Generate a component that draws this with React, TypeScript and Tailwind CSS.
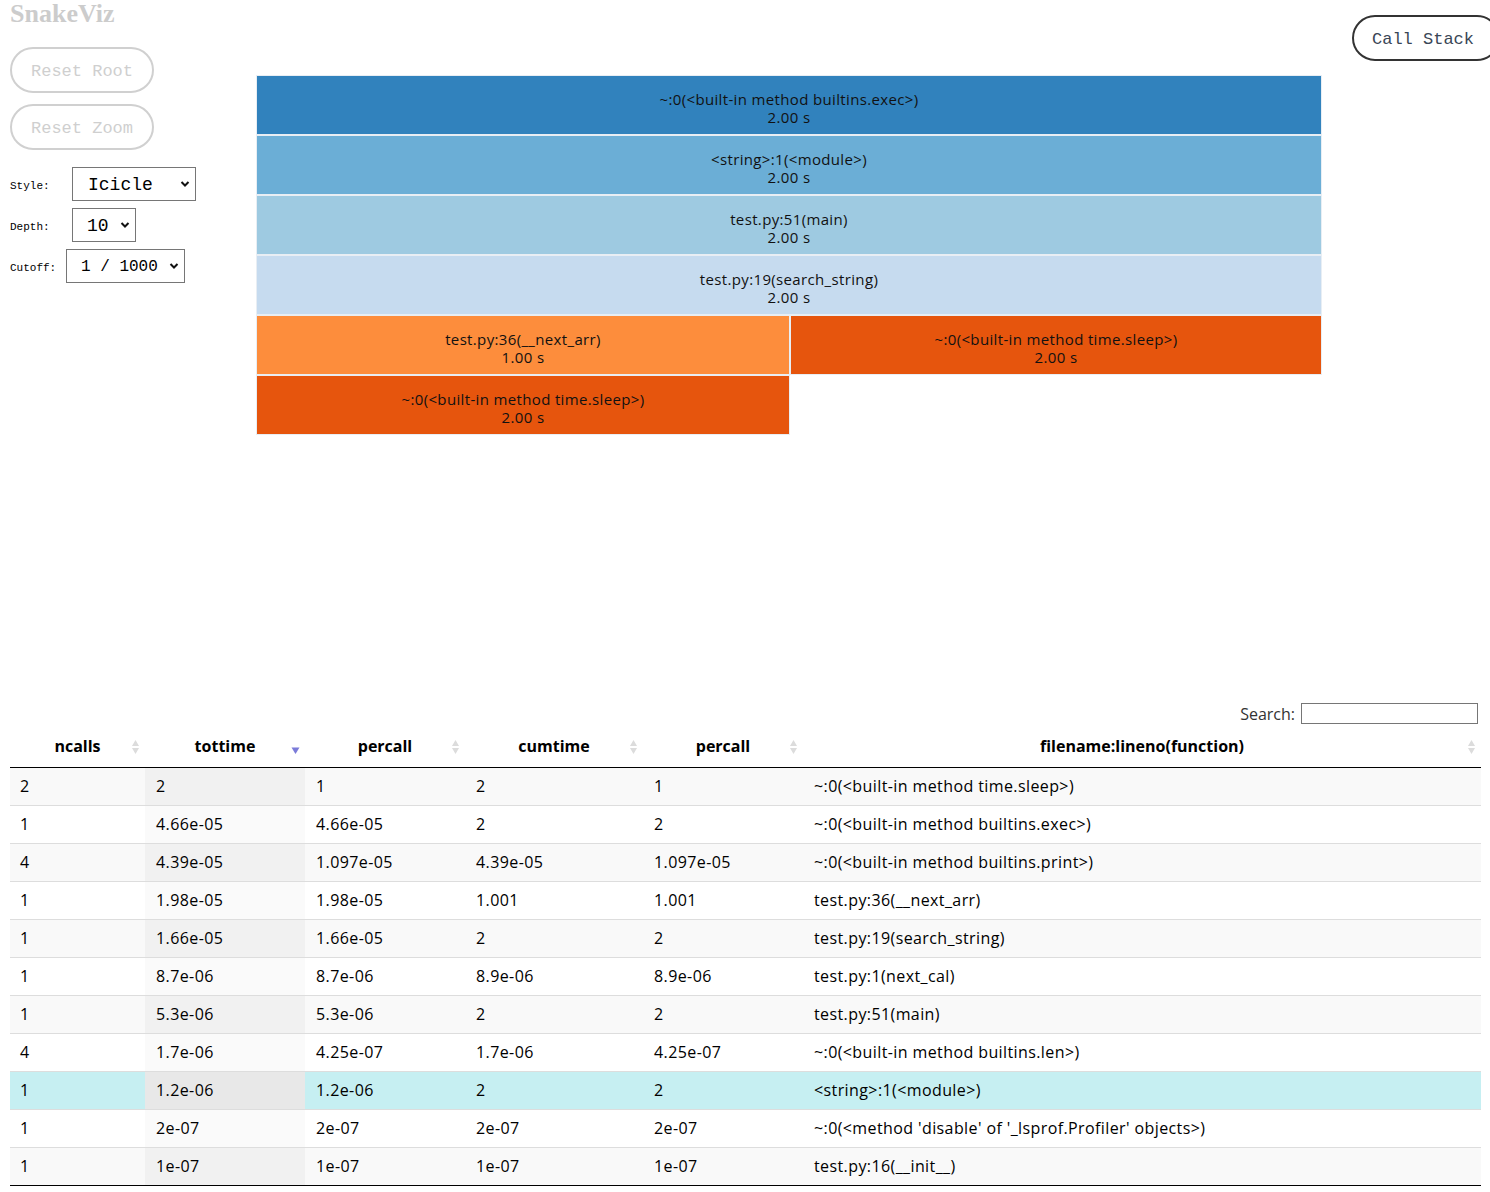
import React from "react";

type Row = {
  ncalls: string;
  tottime: string;
  percall: string;
  cumtime: string;
  percall2: string;
  fn: string;
  hi?: boolean;
};

const rows: Row[] = [
  { ncalls: "2", tottime: "2", percall: "1", cumtime: "2", percall2: "1", fn: "~:0(<built-in method time.sleep>)" },
  { ncalls: "1", tottime: "4.66e-05", percall: "4.66e-05", cumtime: "2", percall2: "2", fn: "~:0(<built-in method builtins.exec>)" },
  { ncalls: "4", tottime: "4.39e-05", percall: "1.097e-05", cumtime: "4.39e-05", percall2: "1.097e-05", fn: "~:0(<built-in method builtins.print>)" },
  { ncalls: "1", tottime: "1.98e-05", percall: "1.98e-05", cumtime: "1.001", percall2: "1.001", fn: "test.py:36(__next_arr)" },
  { ncalls: "1", tottime: "1.66e-05", percall: "1.66e-05", cumtime: "2", percall2: "2", fn: "test.py:19(search_string)" },
  { ncalls: "1", tottime: "8.7e-06", percall: "8.7e-06", cumtime: "8.9e-06", percall2: "8.9e-06", fn: "test.py:1(next_cal)" },
  { ncalls: "1", tottime: "5.3e-06", percall: "5.3e-06", cumtime: "2", percall2: "2", fn: "test.py:51(main)" },
  { ncalls: "4", tottime: "1.7e-06", percall: "4.25e-07", cumtime: "1.7e-06", percall2: "4.25e-07", fn: "~:0(<built-in method builtins.len>)" },
  { ncalls: "1", tottime: "1.2e-06", percall: "1.2e-06", cumtime: "2", percall2: "2", fn: "<string>:1(<module>)", hi: true },
  { ncalls: "1", tottime: "2e-07", percall: "2e-07", cumtime: "2e-07", percall2: "2e-07", fn: "~:0(<method 'disable' of '_lsprof.Profiler' objects>)" },
  { ncalls: "1", tottime: "1e-07", percall: "1e-07", cumtime: "1e-07", percall2: "1e-07", fn: "test.py:16(__init__)" },
];

const SortBoth = () => (
  <svg width="9" height="16" viewBox="0 0 9 16" className="absolute right-[5px] top-1/2 -translate-y-1/2">
    <path d="M4.5 1 L8 7 L1 7 Z" fill="#dcdcdc" />
    <path d="M4.5 15 L8 9 L1 9 Z" fill="#dcdcdc" />
  </svg>
);

const SortDesc = () => (
  <svg width="9" height="16" viewBox="0 0 9 16" className="absolute right-[5px] top-1/2 -translate-y-1/2">
    <path d="M4.5 15 L8.5 8.5 L0.5 8.5 Z" fill="#7b7bd9" />
  </svg>
);

const Chevron = () => (
  <svg width="10" height="7" viewBox="0 0 10 7" className="pointer-events-none absolute right-[5px] top-1/2 -translate-y-1/2">
    <path d="M1.5 1.5 L5 5 L8.5 1.5" stroke="#111" strokeWidth="2" fill="none" />
  </svg>
);

const Cell = ({ label, time, bg }: { label: string; time: string; bg: string }) => (
  <div
    className={`flex h-full flex-col items-center justify-center border border-[#e8eef4] pt-[5px] text-[15px] leading-[18px] tracking-[0.35px] text-[#111] ${bg}`}
  >
    <span>{label}</span>
    <span>{time}</span>
  </div>
);

export default function App() {
  const mono = { fontFamily: '"Liberation Mono", "DejaVu Sans Mono", monospace' };
  const sans = { fontFamily: '"Open Sans", "Noto Sans", sans-serif' };

  return (
    <div className="relative min-h-[1192px] overflow-hidden bg-white" style={sans}>
      <div className="flex h-[700px]">
        <div className="w-[256px] shrink-0 pl-[10px]" style={mono}>
          <h1 className="h-[27px] text-[26px] font-bold leading-[27px] text-[#cccccc]" style={{ fontFamily: '"Liberation Serif", serif' }}>
            SnakeViz
          </h1>
          <button className="mt-[20px] block h-[46px] w-[144px] rounded-full border-2 border-[#d0d0d0] bg-white pt-[4px] text-[17px] text-[#cfcfcf]">
            Reset Root
          </button>
          <button className="mt-[11px] block h-[46px] w-[144px] rounded-full border-2 border-[#d0d0d0] bg-white pt-[4px] text-[17px] text-[#cfcfcf]">
            Reset Zoom
          </button>
          <div className="mt-[17px] flex flex-col gap-[7px] text-[11px] text-black">
            <div className="flex items-center">
              <span className="w-[62px] pt-[4px]">Style:</span>
              <div className="relative h-[34px] w-[124px] border border-[#767676] bg-white">
                <span className="absolute left-[15px] top-[7px] text-[18px] leading-[20px]">Icicle</span>
                <Chevron />
              </div>
            </div>
            <div className="flex items-center">
              <span className="w-[62px] pt-[4px]">Depth:</span>
              <div className="relative h-[34px] w-[64px] border border-[#767676] bg-white">
                <span className="absolute left-[14px] top-[7px] text-[18px] leading-[20px]">10</span>
                <Chevron />
              </div>
            </div>
            <div className="flex items-center">
              <span className="w-[56px] pt-[4px]">Cutoff:</span>
              <div className="relative h-[34px] w-[119px] border border-[#767676] bg-white">
                <span className="absolute left-[14px] top-[7px] text-[16px] leading-[20px]">1 / 1000</span>
                <Chevron />
              </div>
            </div>
          </div>
        </div>

        <div className="mt-[75px] flex h-[360px] w-[1066px] flex-col">
          <div className="h-[60px]"><Cell label="~:0(<built-in method builtins.exec>)" time="2.00 s" bg="bg-[#3182bd]" /></div>
          <div className="h-[60px]"><Cell label="<string>:1(<module>)" time="2.00 s" bg="bg-[#6baed6]" /></div>
          <div className="h-[60px]"><Cell label="test.py:51(main)" time="2.00 s" bg="bg-[#9ecae1]" /></div>
          <div className="h-[60px]"><Cell label="test.py:19(search_string)" time="2.00 s" bg="bg-[#c6dbef]" /></div>
          <div className="flex h-[60px]">
            <div className="w-[534px]"><Cell label="test.py:36(__next_arr)" time="1.00 s" bg="bg-[#fd8d3c]" /></div>
            <div className="flex-1"><Cell label="~:0(<built-in method time.sleep>)" time="2.00 s" bg="bg-[#e6550d]" /></div>
          </div>
          <div className="flex h-[60px]">
            <div className="w-[534px]"><Cell label="~:0(<built-in method time.sleep>)" time="2.00 s" bg="bg-[#e6550d]" /></div>
          </div>
        </div>
      </div>

      <button
        className="absolute left-[1352px] top-[15px] h-[46px] w-[148px] rounded-full border-2 border-[#333] bg-white pr-[6px] pt-[4px] text-[17px] text-[#3a4656]"
        style={mono}
      >
        Call Stack
      </button>

      <div className="flex h-[28px] items-start justify-end pr-[12px] pt-[3px] text-[16px] text-[#333]">
        <label className="flex items-center gap-[6px] leading-[20px]">
          Search:
          <input className="h-[21px] w-[177px] border border-[#767676] bg-white" />
        </label>
      </div>

      <table className="ml-[10px] w-[1471px] table-fixed border-collapse text-[16px] text-black">
        <colgroup>
          <col className="w-[135px]" />
          <col className="w-[160px]" />
          <col className="w-[160px]" />
          <col className="w-[178px]" />
          <col className="w-[160px]" />
          <col className="w-[678px]" />
        </colgroup>
        <thead>
          <tr className="h-[39px] border-b border-black">
            {["ncalls", "tottime", "percall", "cumtime", "percall", "filename:lineno(function)"].map((h, i) => (
              <th key={i} className="relative pb-[2px] text-center font-bold">
                {h}
                {i === 1 ? <SortDesc /> : <SortBoth />}
              </th>
            ))}
          </tr>
        </thead>
        <tbody className="tracking-[0.4px]">
          {rows.map((r, i) => {
            const odd = i % 2 === 0;
            const base = r.hi ? "bg-[#c6eff2]" : odd ? "bg-[#f9f9f9]" : "bg-white";
            const sorted = r.hi ? "bg-[#e8e8e8]" : odd ? "bg-[#f1f1f1]" : "bg-[#fafafa]";
            const last = i === rows.length - 1;
            return (
              <tr
                key={i}
                className={`h-[38px] ${i > 0 ? "border-t border-t-[#dddddd]" : ""} ${last ? "border-b border-b-black" : ""}`}
              >
                <td className={`px-[10px] ${base}`}>{r.ncalls}</td>
                <td className={`px-[11px] ${sorted}`}>{r.tottime}</td>
                <td className={`px-[11px] ${base}`}>{r.percall}</td>
                <td className={`px-[11px] ${base}`}>{r.cumtime}</td>
                <td className={`px-[11px] ${base}`}>{r.percall2}</td>
                <td className={`px-[11px] ${base}`}>{r.fn}</td>
              </tr>
            );
          })}
        </tbody>
      </table>
    </div>
  );
}
